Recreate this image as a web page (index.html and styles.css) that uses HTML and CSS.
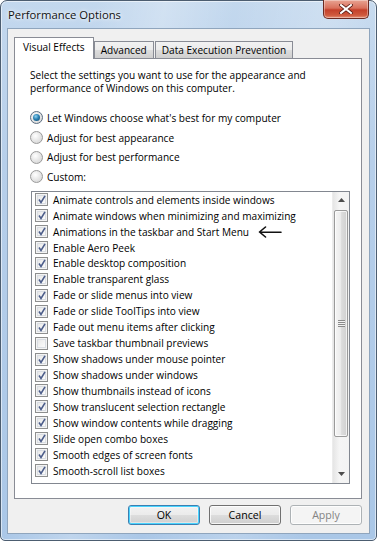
FILE: index.html
```html
<!DOCTYPE html>
<html>
<head>
<meta charset="utf-8">
<link rel="stylesheet" href="styles.css">
</head>
<body>
<div class="window">
  <div class="titlebar">
    <span class="title">Performance Options</span>
    <div class="close"><svg width="14" height="10" viewBox="0 0 14 10"><path d="M2 1 L12 9 M12 1 L2 9" stroke="#5a1d14" stroke-width="3.6" stroke-linecap="square"/><path d="M2 1 L12 9 M12 1 L2 9" stroke="#ffffff" stroke-width="2" stroke-linecap="square"/></svg></div>
  </div>
  <div class="client">
    <div class="tabs">
      <div class="tab active">Visual Effects</div>
      <div class="tab">Advanced</div>
      <div class="tab">Data Execution Prevention</div>
    </div>
    <div class="panel">
      <p class="desc">Select the settings you want to use for the appearance and performance of Windows on this computer.</p>
      <div class="radios">
        <div class="radio-row"><span class="radio checked"></span>Let Windows choose what's best for my computer</div>
        <div class="radio-row"><span class="radio"></span>Adjust for best appearance</div>
        <div class="radio-row"><span class="radio"></span>Adjust for best performance</div>
        <div class="radio-row"><span class="radio"></span>Custom:</div>
      </div>
      <div class="listbox">
        <div class="items">
          <div class="item"><span class="cb on"></span>Animate controls and elements inside windows</div>
          <div class="item"><span class="cb on"></span>Animate windows when minimizing and maximizing</div>
          <div class="item"><span class="cb on"></span>Animations in the taskbar and Start Menu<svg class="arrow" width="24" height="12" viewBox="0 0 24 12"><path d="M23 6.3 L2 6 M7.5 1 L1.5 6 L7.5 11" fill="none" stroke="#111" stroke-width="1.6" stroke-linecap="round" stroke-linejoin="round"/></svg></div>
          <div class="item"><span class="cb on"></span>Enable Aero Peek</div>
          <div class="item"><span class="cb on"></span>Enable desktop composition</div>
          <div class="item"><span class="cb on"></span>Enable transparent glass</div>
          <div class="item"><span class="cb on"></span>Fade or slide menus into view</div>
          <div class="item"><span class="cb on"></span>Fade or slide ToolTips into view</div>
          <div class="item"><span class="cb on"></span>Fade out menu items after clicking</div>
          <div class="item"><span class="cb"></span>Save taskbar thumbnail previews</div>
          <div class="item"><span class="cb on"></span>Show shadows under mouse pointer</div>
          <div class="item"><span class="cb on"></span>Show shadows under windows</div>
          <div class="item"><span class="cb on"></span>Show thumbnails instead of icons</div>
          <div class="item"><span class="cb on"></span>Show translucent selection rectangle</div>
          <div class="item"><span class="cb on"></span>Show window contents while dragging</div>
          <div class="item"><span class="cb on"></span>Slide open combo boxes</div>
          <div class="item"><span class="cb on"></span>Smooth edges of screen fonts</div>
          <div class="item"><span class="cb on"></span>Smooth-scroll list boxes</div>
        </div>
        <div class="scrollbar">
          <div class="sb-btn"><svg width="7" height="4" viewBox="0 0 7 4"><path d="M0 4 L3.5 0 L7 4 Z" fill="#4d4d4d"/></svg></div>
          <div class="sb-track">
            <div class="thumb"><span class="grip"></span></div>
          </div>
          <div class="sb-btn"><svg width="7" height="4" viewBox="0 0 7 4"><path d="M0 0 L3.5 4 L7 0 Z" fill="#4d4d4d"/></svg></div>
        </div>
      </div>
    </div>
    <div class="buttons">
      <button class="btn default">OK</button>
      <button class="btn">Cancel</button>
      <button class="btn disabled">Apply</button>
    </div>
  </div>
</div>
</body>
</html>
```
FILE: styles.css
```css
* { box-sizing: border-box; }
html, body { margin: 0; padding: 0; }
body {
  width: 377px;
  height: 541px;
  overflow: hidden;
  background: #fff;
  font-family: "Open Sans", "Noto Sans", sans-serif;
  font-size: 10.1px;
  color: #000;
}
.window {
  width: 377px;
  height: 541px;
  border: 1px solid #4c5d70;
  border-radius: 7px 7px 5px 5px;
  background:
    linear-gradient(100deg, rgba(255,255,255,0) 20%, rgba(255,255,255,0.25) 35%, rgba(255,255,255,0) 50%, rgba(255,255,255,0.2) 70%, rgba(255,255,255,0) 85%),
    linear-gradient(180deg, #c3d8ee 0%, #b7cfea 30%, #aac7e7 100%);
  display: flex;
  flex-direction: column;
  box-shadow: inset 0 0 0 1px rgba(255,255,255,0.55);
}
.titlebar {
  height: 27px;
  display: flex;
  justify-content: space-between;
  align-items: flex-start;
  padding-left: 7px;
}
.title {
  margin-top: 6px;
  font-size: 11.3px;
  color: #111;
  text-shadow: 0 0 6px rgba(255,255,255,0.9), 0 0 3px rgba(255,255,255,0.9);
}
.close {
  width: 46px;
  height: 19px;
  margin-right: 7px;
  margin-top: -1px;
  border: 1px solid #6b2a22;
  border-top: none;
  border-radius: 0 0 5px 5px;
  background: linear-gradient(180deg, #e8a493 0%, #d9705c 45%, #c4402a 55%, #cf5a3e 85%, #e6947a 100%);
  box-shadow: inset 0 0 0 1px rgba(255,255,255,0.35);
  display: flex;
  align-items: center;
  justify-content: center;
}
.client {
  margin: 0 6px 6px 6px;
  flex: 1;
  background: #f0f0f0;
  border: 1px solid #8fa5bd;
  padding: 8px 7px 0 6px;
  display: flex;
  flex-direction: column;
}
.tabs {
  display: flex;
  align-items: flex-end;
  height: 21px;
  position: relative;
  z-index: 2;
  padding-left: 1px;
}
.tab {
  height: 17px;
  padding: 0 6px;
  border: 1px solid #898c95;
  border-bottom: none;
  background: linear-gradient(180deg, #f2f2f2 0%, #ebebeb 50%, #dddddd 51%, #cfcfcf 100%);
  line-height: 16px;
  margin-right: 1px;
  color: #000;
}
.tab.active {
  height: 22px;
  margin-bottom: -1px;
  background: #fff;
  padding: 0 8px 0 8px;
  line-height: 18px;
  margin-left: -1px;
  margin-right: 0;
}
.panel {
  height: 441px;
  background: #fff;
  border: 1px solid #898c95;
  padding: 10px 0 0 15px;
  display: flex;
  flex-direction: column;
}
.desc {
  margin: 0;
  line-height: 13px;
  width: 320px;
}
.radios {
  margin-top: 13px;
  display: flex;
  flex-direction: column;
}
.radio-row {
  height: 19.7px;
  display: flex;
  align-items: center;
  gap: 4px;
}
.radio {
  width: 13px;
  height: 13px;
  border-radius: 50%;
  border: 1px solid #9a9a9a;
  background: radial-gradient(circle at 40% 35%, #ffffff 0%, #e6e6e6 50%, #cfcfcf 100%);
  display: inline-flex;
  align-items: center;
  justify-content: center;
  flex: none;
}
.radio.checked {
  border-color: #5b6d80;
}
.radio.checked::after {
  content: "";
  width: 7px;
  height: 7px;
  border-radius: 50%;
  background: radial-gradient(circle at 40% 35%, #8fd2f0 0%, #2b82b4 45%, #0d3f63 100%);
}
.listbox {
  margin-top: 4px;
  margin-left: 1px;
  width: 319px;
  height: 293px;
  border: 1px solid #828790;
  display: flex;
  background: #fff;
}
.items {
  flex: 1;
  padding: 0 0 0 3px;
}
.item {
  height: 15.94px;
  display: flex;
  align-items: center;
  gap: 5px;
  white-space: nowrap;
}
.arrow {
  margin-left: 4px;
  margin-top: 1px;
}
.cb {
  width: 13px;
  height: 13px;
  border: 1px solid #8e8f8f;
  flex: none;
  position: relative;
  box-shadow: inset 0 0 0 1px #f4f4f4, inset 0 0 0 2px #d9dde3;
  background: linear-gradient(135deg, #e3e3e3 0%, #f5f5f5 60%, #ffffff 100%);
}
.cb.on::after {
  content: "";
  position: absolute;
  left: 2px;
  top: 1px;
  width: 8px;
  height: 9px;
  background: url("data:image/svg+xml,%3Csvg xmlns='http://www.w3.org/2000/svg' width='8' height='9' viewBox='0 0 8 9'%3E%3Cpath d='M1 4.5 L3 7.5 L7 0.8' fill='none' stroke='%234c5d8a' stroke-width='1.6'/%3E%3C/svg%3E") no-repeat;
}
.scrollbar {
  width: 17px;
  display: flex;
  flex-direction: column;
  background: linear-gradient(90deg, #e5e5e5 0%, #f5f5f5 40%, #f3f3f3 100%);
  border-left: 1px solid #ececec;
}
.sb-btn {
  height: 17px;
  display: flex;
  align-items: center;
  justify-content: center;
}
.sb-track {
  flex: 1;
  padding: 1px 1px 0 1px;
}
.thumb {
  height: 227px;
  border: 1px solid #9a9a9a;
  border-radius: 2px;
  background: linear-gradient(90deg, #f5f5f5 0%, #ececec 45%, #dcdcdc 55%, #d0d0d0 100%);
  box-shadow: inset 0 0 0 1px rgba(255,255,255,0.7);
  display: flex;
  align-items: center;
  justify-content: center;
}
.grip {
  width: 7px;
  height: 7px;
  background: repeating-linear-gradient(180deg, #8a8a8a 0 1px, #f2f2f2 1px 2px);
}
.buttons {
  display: flex;
  justify-content: flex-end;
  gap: 9px;
  margin-top: 6px;
}
.btn {
  width: 72px;
  height: 20px;
  border: 1px solid #707070;
  border-radius: 3px;
  background: linear-gradient(180deg, #f2f2f2 0%, #ebebeb 50%, #dddddd 51%, #cfcfcf 100%);
  box-shadow: inset 0 0 0 1px rgba(255,255,255,0.8);
  font-family: "Open Sans", sans-serif;
  font-size: 10.6px;
  color: #000;
  padding: 0;
}
.btn.default {
  border-color: #3c7fb1;
  box-shadow: inset 0 0 0 1px #48d4ff, inset 0 0 0 2px rgba(255,255,255,0.4);
}
.btn.disabled {
  border-color: #adb2b5;
  background: #f4f4f4;
  color: #838383;
}
```
